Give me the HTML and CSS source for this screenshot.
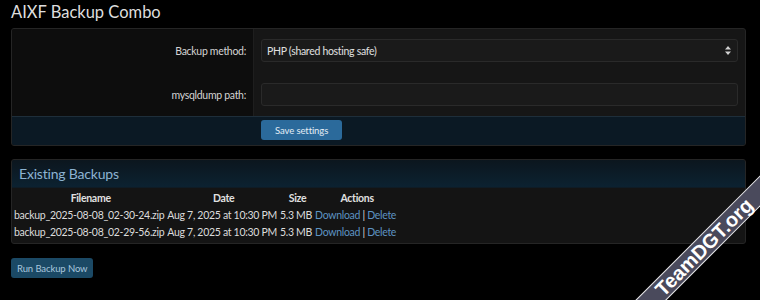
FILE: index.html
```html
<!DOCTYPE html>
<html lang="en">
<head>
    <meta charset="UTF-8">
    <title>AIXF Backup Combo</title>
    <link rel="stylesheet" href="styles.css">
</head>
<body>
    <h1 class="page-title">AIXF Backup Combo</h1>

    <form class="block settings-form">
        <div class="form-row">
            <label class="form-label" for="method">Backup method:</label>
            <div class="form-field">
                <div class="select-box" id="method">
                    <span>PHP (shared hosting safe)</span>
                    <svg class="select-arrows" width="6" height="9" viewBox="0 0 6 9"><path d="M3 0 L6 3.5 H0 Z M3 9 L6 5.5 H0 Z" fill="#d0d0d0"/></svg>
                </div>
            </div>
        </div>
        <div class="form-row">
            <label class="form-label" for="dumppath">mysqldump path:</label>
            <div class="form-field">
                <input type="text" class="text-input" id="dumppath">
            </div>
        </div>
        <div class="form-footer">
            <div class="footer-spacer"></div>
            <div class="footer-buttons">
                <button type="button" class="btn btn-primary">Save settings</button>
            </div>
        </div>
    </form>

    <div class="block backups">
        <h2 class="block-header">Existing Backups</h2>
        <div class="block-body">
            <table class="backup-table">
                <thead>
                    <tr>
                        <th>Filename</th>
                        <th>Date</th>
                        <th>Size</th>
                        <th>Actions</th>
                    </tr>
                </thead>
                <tbody>
                    <tr>
                        <td>backup_2025-08-08_02-30-24.zip</td>
                        <td>Aug 7, 2025 at 10:30 PM</td>
                        <td>5.3 MB</td>
                        <td><a href="#">Download</a> | <a href="#">Delete</a></td>
                    </tr>
                    <tr>
                        <td>backup_2025-08-08_02-29-56.zip</td>
                        <td>Aug 7, 2025 at 10:30 PM</td>
                        <td>5.3 MB</td>
                        <td><a href="#">Download</a> | <a href="#">Delete</a></td>
                    </tr>
                </tbody>
            </table>
        </div>
    </div>

    <button type="button" class="btn btn-run">Run Backup Now</button>

    <div class="corner">
        <div class="ribbon">TeamDGT.org</div>
    </div>
</body>
</html>
```

FILE: styles.css
```css
html {
    height: 300px;
    overflow: hidden;
}
body {
    margin: 0;
    padding: 0 14px 0 11px;
    background-color: #000000;
    color: #dcdcdc;
    font-family: Lato, "Open Sans", sans-serif;
    font-size: 10.5px;
    letter-spacing: -0.3px;
    height: 300px;
    overflow: hidden;
    position: relative;
}
.page-title {
    margin: 0;
    padding-top: 1px;
    font-size: 16.5px;
    font-weight: 400;
    letter-spacing: 0;
    line-height: 22px;
    color: #dedede;
    height: 27px;
}
.block {
    border: 1px solid #252525;
    border-radius: 3px;
    overflow: hidden;
}
.settings-form {
    background-color: #161616;
}
.form-row {
    display: flex;
}
.form-label {
    width: 234px;
    padding-right: 7px;
    text-align: right;
    background-color: #0d0d0d;
    border-right: 1px solid #1e1e1e;
    display: flex;
    align-items: center;
    justify-content: flex-end;
    color: #d4d4d4;
}
.form-field {
    flex: 1;
    padding: 10px 7px 10px 7px;
}
.form-row:first-child .form-field {
    padding-bottom: 11px;
}
.select-box {
    height: 21px;
    border: 1px solid #2a2a2a;
    border-radius: 3px;
    background-color: #1a1a1a;
    display: flex;
    align-items: center;
    justify-content: space-between;
    padding: 0 6px 0 5px;
    color: #e0e0e0;
}
.text-input {
    display: block;
    width: 100%;
    box-sizing: border-box;
    height: 23px;
    border: 1px solid #2a2a2a;
    border-radius: 3px;
    background-color: #1a1a1a;
}
.form-footer {
    display: flex;
    background-color: #0b1924;
    border-top: 1px solid #1e2e3a;
    height: 28px;
}
.footer-spacer {
    width: 242px;
}
.footer-buttons {
    padding: 3px 7px;
}
.btn {
    font-family: Lato, "Open Sans", sans-serif;
    font-size: 9.5px;
    letter-spacing: -0.1px;
    border: none;
    border-radius: 3px;
    cursor: pointer;
    height: 20px;
    padding: 0 6px;
}
.btn-primary {
    background-color: #2b6a9b;
    color: #e4edf5;
    padding: 0 14px;
}
.backups {
    margin-top: 13px;
    background-color: #141414;
}
.block-header {
    margin: 0;
    height: 27px;
    line-height: 28px;
    padding-left: 7px;
    font-size: 14px;
    font-weight: 400;
    letter-spacing: -0.2px;
    color: #8db3d2;
    background: linear-gradient(to bottom, #0c161e, #0c2231);
    border-bottom: 1px solid #0f1c26;
}
.block-body {
    padding: 1px 2px 3px 2px;
}
.backup-table {
    border-collapse: collapse;
}
.backup-table th,
.backup-table td {
    padding: 0;
    height: 17px;
    white-space: nowrap;
}
.backup-table th {
    font-weight: 700;
    text-align: center;
    color: #e0e0e0;
}
.backup-table td {
    padding-right: 3px;
}
.backup-table a {
    color: #5d93c2;
    text-decoration: none;
}
.btn-run {
    margin-top: 14px;
    background-color: #1b4965;
    color: #a9c7de;
}
.corner {
    position: absolute;
    right: 0;
    bottom: 0;
    width: 140px;
    height: 130px;
    overflow: hidden;
}
.ribbon {
    position: absolute;
    left: -36px;
    top: 66px;
    width: 240px;
    height: 20px;
    line-height: 21px;
    transform: rotate(-45deg);
    background-color: #4a4a5c;
    border-top: 1px solid #e8e8e8;
    border-bottom: 1px solid #e8e8e8;
    color: #ffffff;
    font-family: "Liberation Sans", Arial, sans-serif;
    font-weight: 700;
    font-size: 20px;
    letter-spacing: 0;
    text-align: center;
}
```
